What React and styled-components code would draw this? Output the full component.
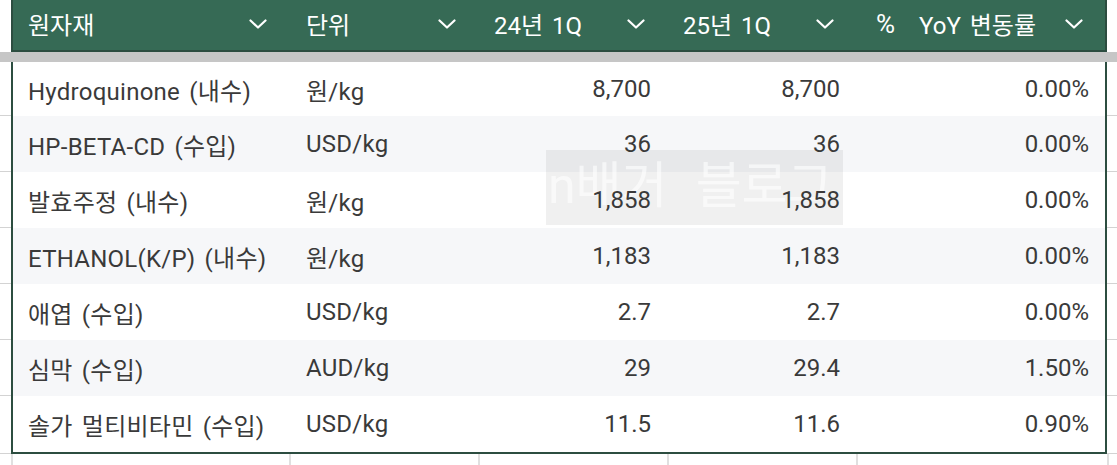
import React from "react";
import styled, { createGlobalStyle } from "styled-components";

const GlobalStyle = createGlobalStyle`
  html, body {
    margin: 0;
    padding: 0;
    background: #ffffff;
  }
  body {
    font-family: Roboto, "Noto Sans CJK KR", "Liberation Sans", sans-serif;
  }
`;

const COLS = [276, 189, 189, 189, 249];

const Page = styled.div`
  position: relative;
  width: 1117px;
  height: 465px;
  overflow: hidden;
  background: #ffffff;
`;

const Line = styled.div`
  display: flex;
  height: ${(p) => p.$h}px;
`;

const Gutter = styled.div`
  width: ${(p) => p.$w}px;
  flex: none;
  box-sizing: border-box;
  border-bottom: ${(p) => (p.$grid ? "1px solid #d3d3d3" : "none")};
`;

const Table = styled.div`
  display: flex;
  flex: none;
  border-left: 2px solid #2c4d40;
  border-right: 2px solid #2c4d40;
  border-bottom: ${(p) => (p.$last ? "2px solid #2c4d40" : "none")};
  background: ${(p) => p.$bg};
`;

const HeadCell = styled.div`
  width: ${(p) => p.$w}px;
  box-sizing: border-box;
  display: flex;
  align-items: center;
  justify-content: space-between;
  padding: 0 22px 3px ${(p) => p.$pl || 16}px;
  color: #ffffff;
  font-size: 24px;
  word-spacing: 3px;
`;

const HeadLabel = styled.span`
  display: flex;
  align-items: center;
  white-space: nowrap;
`;

const TypeIcon = styled.span`
  font-size: 26px;
  margin-right: 24px;
`;

const FrozenBar = styled.div`
  height: 10px;
  background: #c6c6c6;
`;

const Cell = styled.div`
  position: relative;
  z-index: 2;
  width: ${(p) => p.$w}px;
  box-sizing: border-box;
  display: flex;
  align-items: center;
  justify-content: ${(p) => (p.$num ? "flex-end" : "flex-start")};
  padding: 0 ${(p) => (p.$num ? 16 : 0)}px 0 ${(p) => (p.$num ? 0 : p.$pl || 16)}px;
  color: #3a3a3a;
  font-size: 24px;
  letter-spacing: ${(p) => (p.$num ? 0 : 0.25)}px;
  word-spacing: 3px;
  white-space: nowrap;
`;

const GridCell = styled.div`
  width: ${(p) => p.$w}px;
  flex: none;
  box-sizing: border-box;
  border-left: 2px solid #e0e0e0;
`;

const Watermark = styled.div`
  position: absolute;
  z-index: 1;
  left: 546px;
  top: 150px;
  width: 297px;
  height: 75px;
  background: rgba(0, 0, 0, 0.06);
  overflow: hidden;
  display: flex;
  align-items: center;
  gap: 28px;
  padding: 0 0 4px 2px;
  box-sizing: border-box;
  color: rgba(255, 255, 255, 0.6);
  font-size: 50px;
  line-height: 1;
  white-space: nowrap;
  pointer-events: none;
`;

const Chevron = () => (
  <svg width="18" height="10" viewBox="0 0 18 10" fill="none">
    <path d="M1.5 1.5 L9 8.5 L16.5 1.5" stroke="#ffffff" strokeWidth="2.2" strokeLinecap="round" strokeLinejoin="round" />
  </svg>
);

const headers = [
  { label: "원자재", pl: 15 },
  { label: "단위", pl: 17 },
  { label: "24년 1Q" },
  { label: "25년 1Q" },
  { label: "YoY 변동률", icon: "%", pl: 20 },
];

const rows = [
  ["Hydroquinone (내수)", "원/kg", "8,700", "8,700", "0.00%"],
  ["HP-BETA-CD (수입)", "USD/kg", "36", "36", "0.00%"],
  ["발효주정 (내수)", "원/kg", "1,858", "1,858", "0.00%"],
  ["ETHANOL(K/P) (내수)", "원/kg", "1,183", "1,183", "0.00%"],
  ["애엽 (수입)", "USD/kg", "2.7", "2.7", "0.00%"],
  ["심막 (수입)", "AUD/kg", "29", "29.4", "1.50%"],
  ["솔가 멀티비타민 (수입)", "USD/kg", "11.5", "11.6", "0.90%"],
];

export default function App() {
  return (
    <Page>
      <GlobalStyle />
      <Line $h={52}>
        <Gutter $w={11} />
        <Table $bg="#366a55" $last>
          {headers.map((h, i) => (
            <HeadCell key={h.label} $w={COLS[i]} $pl={h.pl}>
              <HeadLabel>
                {h.icon && <TypeIcon>{h.icon}</TypeIcon>}
                {h.label}
              </HeadLabel>
              <Chevron />
            </HeadCell>
          ))}
        </Table>
        <Gutter $w={10} />
      </Line>
      <FrozenBar />
      {rows.map((r, ri) => {
        const last = ri === rows.length - 1;
        const h = ri === 0 ? 54 : 56;
        return (
          <Line key={r[0]} $h={last ? h + 2 : h}>
            <Gutter $w={11} $grid />
            <Table $bg={ri % 2 === 1 ? "#f6f7f9" : "#ffffff"} $last={last}>
              {r.map((v, ci) => (
                <Cell key={ci} $w={COLS[ci]} $num={ci >= 2} $pl={ci === 0 ? 15 : 17}>
                  {v}
                </Cell>
              ))}
            </Table>
            <Gutter $w={10} $grid />
          </Line>
        );
      })}
      <Line $h={20}>
        <Gutter $w={11} />
        <GridCell $w={278} />
        <GridCell $w={189} />
        <GridCell $w={189} />
        <GridCell $w={189} />
        <GridCell $w={251} />
        <GridCell $w={10} />
      </Line>
      <Watermark>
        <span>n배거</span>
        <span>블로그</span>
      </Watermark>
    </Page>
  );
}
